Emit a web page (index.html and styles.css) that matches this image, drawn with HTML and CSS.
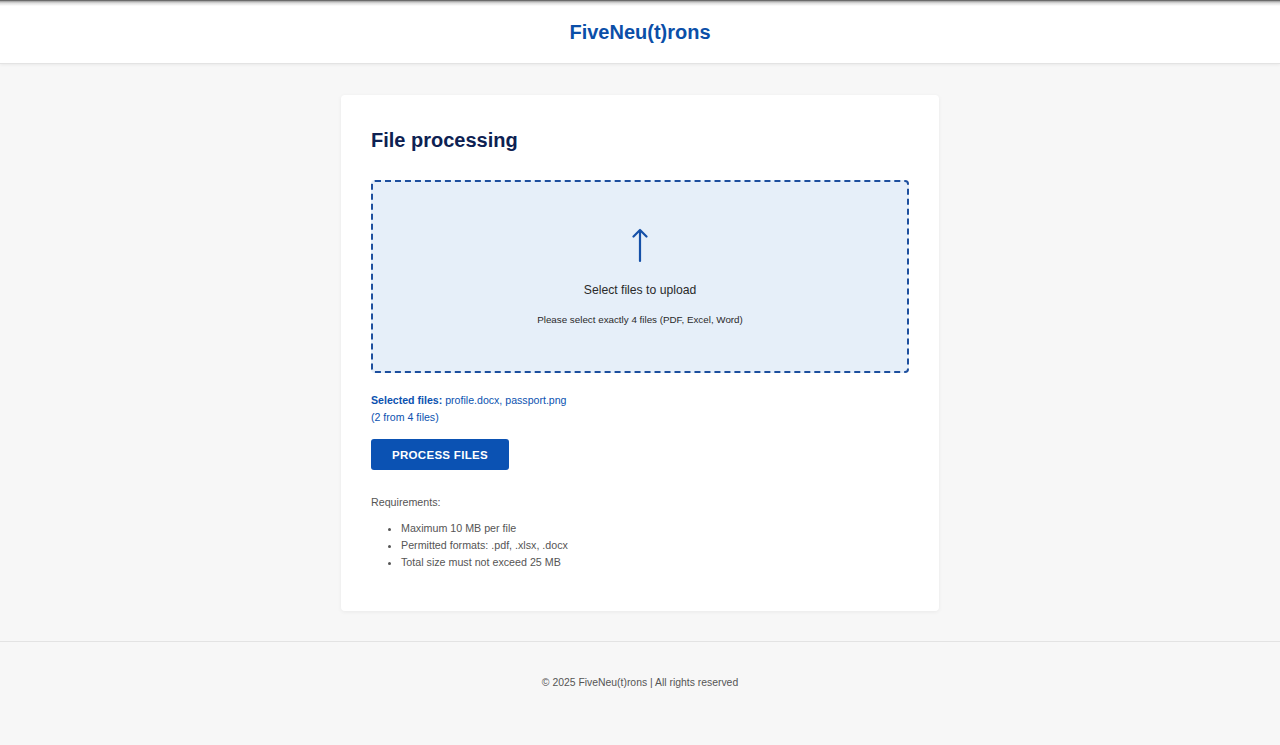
FILE: index.html
```html
<!DOCTYPE html>
<html lang="en">
<head>
<meta charset="utf-8">
<title>FiveNeu(t)rons – File processing</title>
<link rel="stylesheet" href="styles.css">
</head>
<body>
<header class="site-header">
  <div class="brand">FiveNeu(t)rons</div>
</header>
<main class="main">
  <section class="card">
    <h1 class="card-title">File processing</h1>
    <div class="dropzone">
      <svg class="upload-icon" width="18" height="36" viewBox="0 0 18 36" aria-hidden="true">
        <path d="M9 34V3M2.5 9.5L9 3l6.5 6.5" fill="none" stroke="#1550a8" stroke-width="2.2" stroke-linecap="round" stroke-linejoin="round"/>
      </svg>
      <div class="drop-title">Select files to upload</div>
      <div class="drop-hint">Please select exactly 4 files (PDF, Excel, Word)</div>
    </div>
    <div class="selected">
      <div><strong>Selected files:</strong> profile.docx, passport.png</div>
      <div>(2 from 4 files)</div>
    </div>
    <button class="btn" type="button">Process files</button>
    <div class="requirements">
      <div class="req-title">Requirements:</div>
      <ul class="req-list">
        <li>Maximum 10 MB per file</li>
        <li>Permitted formats: .pdf, .xlsx, .docx</li>
        <li>Total size must not exceed 25 MB</li>
      </ul>
    </div>
  </section>
</main>
<footer class="site-footer">
  <p>© 2025 FiveNeu(t)rons | All rights reserved</p>
</footer>
</body>
</html>
```

FILE: styles.css
```css
* { box-sizing: border-box; }
html, body { margin: 0; padding: 0; }
body {
  background: #f7f7f7;
  font-family: "Liberation Sans", Arial, sans-serif;
  color: #333;
  min-height: 745px;
}
.site-header {
  height: 64px;
  background: linear-gradient(to bottom, #3c3c3c 0, #9a9a9a 1px, #dcdcdc 3px, #ffffff 6px);
  border-bottom: 1px solid #e3e3e3;
  box-shadow: 0 1px 3px rgba(0,0,0,0.06);
  display: flex;
  align-items: center;
  justify-content: center;
}
.brand {
  font-size: 20px;
  font-weight: 700;
  color: #0b4fa8;
  margin-top: 1px;
}
.main {
  padding: 31px 0 30px;
  display: flex;
  justify-content: center;
}
.card {
  width: 598px;
  background: #fff;
  border-radius: 4px;
  box-shadow: 0 1px 4px rgba(0,0,0,0.06);
  padding: 30px 30px 40px;
}
.card-title {
  margin: 3px 0 27px;
  font-size: 20px;
  line-height: 25px;
  font-weight: 700;
  color: #0d2152;
}
.dropzone {
  height: 193px;
  background: #e6eff9;
  border: 2px dashed #1d4f9e;
  border-radius: 4px;
  display: flex;
  flex-direction: column;
  align-items: center;
  padding-top: 45px;
}
.upload-icon { display: block; }
.drop-title {
  margin-top: 19px;
  font-size: 12.2px;
  line-height: 16px;
  color: #2a2a2a;
}
.drop-hint {
  margin-top: 15px;
  font-size: 9.8px;
  line-height: 14px;
  color: #2a2a2a;
}
.selected {
  margin-top: 19px;
  font-size: 10.6px;
  line-height: 17px;
  color: #0b52b0;
}
.selected strong { font-weight: 700; }
.btn {
  margin-top: 13px;
  display: block;
  height: 31px;
  padding: 0 21px;
  background: #0b52b3;
  color: #fff;
  border: none;
  border-radius: 3px;
  font-family: inherit;
  font-size: 11.5px;
  font-weight: 700;
  letter-spacing: 0.3px;
  text-transform: uppercase;
}
.requirements {
  margin-top: 24px;
  font-size: 10.7px;
  line-height: 17px;
  color: #555;
}
.req-list {
  margin: 9px 0 0;
  padding-left: 30px;
}
.site-footer {
  border-top: 1px solid #e3e3e3;
  padding: 34px 0 47px;
  text-align: center;
}
.site-footer p {
  margin: 0;
  font-size: 10.4px;
  line-height: 14px;
  color: #555;
}
```
